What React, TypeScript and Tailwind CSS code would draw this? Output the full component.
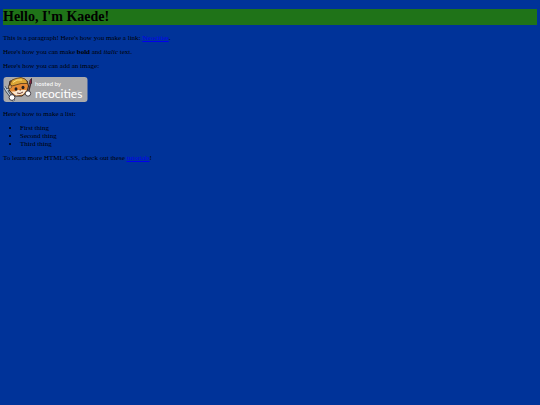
const items = ["First thing", "Second thing", "Third thing"];

/* ---------------- BADGE ---------------- */

function NeocitiesBadge() {
  return (
    <svg
      viewBox="0 0 85 25"
      className="block h-[25px] w-[85px]"
      role="img"
      aria-label="Hosted by Neocities"
    >
      <rect x="0.5" y="0" width="84" height="25" rx="3" fill="#a9a9ab" />

      {/* cat head */}
      <path
        d="M7 4 L5.500 12 L8 15.500 L12 19 L19 19 L24 15 L25.500 9 L24 4 Z"
        fill="#e58a35"
        stroke="#2c211c"
        strokeWidth="1"
      />
      <path
        d="M8 14.500 L12 14.500 L15 13 L18 13 L23.500 13 L20 17.500 L13 18.500 Z"
        fill="#f8e6d0"
      />
      <path
        d="M7 7 L9 3 L13 1.500 L18 0.500 L22 2 Q24.500 4 24.500 6.500 L18 6.500 L9 9 Z"
        fill="#dca536"
        stroke="#50351a"
        strokeWidth="0.8"
      />
      <path d="M10 5.500 L14 3 L19 3" fill="none" stroke="#fbdf79" />
      <path d="M6 8 L9 10 L6 12 Z" fill="#f8d4a2" stroke="#50351a" strokeWidth="0.600" />
      <ellipse cx="13" cy="12" rx="1.500" ry="1.800" fill="#241d20" />
      <ellipse cx="20" cy="10.500" rx="1.500" ry="1.800" fill="#241d20" />
      <path
        d="M16.500 13 L18 13 M14 16 Q17 17.500 20 15"
        fill="none"
        stroke="#633025"
        strokeWidth="0.9"
      />

      {/* wrench and brush */}
      <path
        d="M1.500 10 L3.500 13.500 L5.500 12 M3.500 13.500 L11 24"
        fill="none"
        stroke="#38424f"
        strokeWidth="2.600"
      />
      <path
        d="M1.500 10 L3.500 13.500 L5.500 12 M3.500 13.500 L11 24"
        fill="none"
        stroke="#c7d5e4"
        strokeWidth="1.200"
      />
      <path d="M27.500 7 L24.500 19" stroke="#40272a" strokeWidth="1.400" />
      <path
        d="M26.500 7 L27 3.500 L28.500 1.500 L28.500 6.500 Z"
        fill="#a3243a"
        stroke="#351d2b"
        strokeWidth="0.900"
      />

      {/* paws */}
      <circle cx="9" cy="20.500" r="2.900" fill="#fff" stroke="#403b43" strokeWidth="1" />
      <circle cx="25" cy="16.500" r="2.700" fill="#fff" stroke="#403b43" strokeWidth="1" />

      <g fill="#fff" fontFamily="Lato, sans-serif">
        <text x="32" y="9" fontSize="6">
          hosted by
        </text>
        <text x="32" y="21" fontSize="12">
          neocities
        </text>
      </g>
    </svg>
  );
}

/* ---------------- PAGE ---------------- */

export default function App() {
  return (
    <div className="min-h-screen bg-[#003399] px-[3px] pt-[9px] font-['Liberation_Serif',serif] text-[7px] leading-[8px] text-black">
      <h1 className="mb-[9px] bg-[#1f7318] text-[14px] leading-[16px] font-bold">
        Hello, I'm Kaede!
      </h1>

      <div className="grid gap-[6px]">
        <p>
          This is a paragraph! Here's how you make a link:{" "}
          <a href="#neocities" className="text-[#0000ee] underline">
            Neocities
          </a>
          .
        </p>
        <p>
          Here's how you can make <strong>bold</strong> and <em>italic</em> text.
        </p>
        <p>Here's how you can add an image:</p>
        <div className="pt-px pb-0.5">
          <NeocitiesBadge />
        </div>
        <p>Here's how to make a list:</p>
        <ul className="list-disc pl-[17px]">
          {items.map(item => (
            <li key={item}>{item}</li>
          ))}
        </ul>
        <p>
          To learn more HTML/CSS, check out these{" "}
          <a href="#tutorials" className="text-[#0000ee] underline">
            tutorials
          </a>
          !
        </p>
      </div>
    </div>
  );
}
